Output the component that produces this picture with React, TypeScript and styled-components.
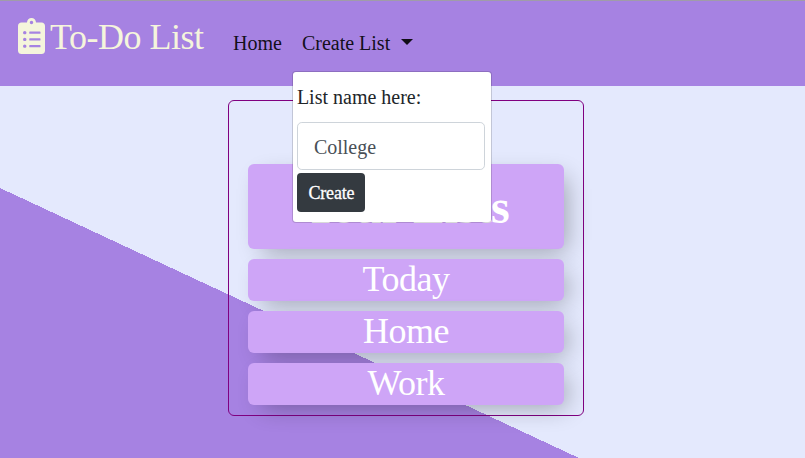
import React from "react";
import styled, { createGlobalStyle } from "styled-components";
import { FaClipboardList } from "react-icons/fa";

const GlobalStyle = createGlobalStyle`
  *, *::before, *::after { box-sizing: border-box; }
  body {
    margin: 0;
    font-family: "Liberation Serif", "Times New Roman", serif;
    color: #212529;
    overflow: hidden;
  }
`;

const Page = styled.div`
  height: 100vh;
  background: linear-gradient(205deg, #e4e9fd 510.6px, #a682e2 510.6px);
`;

const Navbar = styled.nav`
  display: flex;
  align-items: flex-start;
  height: 86px;
  padding: 0 18px;
  border-top: 1px solid #a09ca8;
  background: #a682e2;
`;

const Brand = styled.a`
  display: flex;
  align-items: flex-start;
  gap: 5px;
  width: 215px;
  padding-top: 17px;
  color: beige;
  font-size: 36px;
  line-height: 38px;
  letter-spacing: -0.5px;
  white-space: nowrap;
  svg { width: 27px; height: 36px; }
`;

const NavItem = styled.div`
  position: relative;
  padding-top: 27px;
  margin-right: 20px;
  color: rgba(0, 0, 0, 0.9);
  font-size: 20px;
  line-height: 30px;
  white-space: nowrap;
`;

const Caret = styled.span`
  display: inline-block;
  margin-left: 11px;
  vertical-align: 5px;
  border-top: 6px solid;
  border-right: 6px solid transparent;
  border-left: 6px solid transparent;
`;

const Dropdown = styled.form`
  position: absolute;
  z-index: 2;
  top: 70px;
  left: -10px;
  display: flex;
  flex-direction: column;
  align-items: flex-start;
  width: 200px;
  height: 152px;
  padding: 10px 4px 0;
  color: #212529;
  background: #fff;
  background-clip: padding-box;
  border: 1px solid rgba(0, 0, 0, 0.15);
  border-radius: 4px;
`;

const Label = styled.label`
  height: 40px;
`;

const Input = styled.input`
  width: 188px;
  height: 48px;
  margin-bottom: 3px;
  padding: 9px 16px 7px;
  color: #495057;
  font: inherit;
  border: 1px solid #ced4da;
  border-radius: 4.8px;
`;

const Button = styled.button`
  width: 68px;
  height: 39px;
  padding: 2px 0 0 1px;
  color: #fff;
  font-family: inherit;
  font-size: 18px;
  letter-spacing: -0.2px;
  -webkit-text-stroke: 0.3px #fff;
  background: #343a40;
  border: 0;
  border-radius: 4px;
`;

const Board = styled.main`
  display: flex;
  flex-direction: column;
  gap: 10px;
  width: 356px;
  height: 316px;
  margin: 14px 0 0 228px;
  padding: 63px 19px 0;
  border: 1px solid purple;
  border-radius: 6px;
`;

const Tile = styled.div<{ $heading?: boolean }>`
  flex: none;
  height: ${(p) => (p.$heading ? 85 : 42)}px;
  color: #fff;
  font-size: ${(p) => (p.$heading ? 48 : 36)}px;
  font-weight: ${(p) => (p.$heading ? 700 : 400)};
  line-height: ${(p) => (p.$heading ? 86 : 40)}px;
  letter-spacing: -0.5px;
  text-align: center;
  background: #cea5f7;
  border-radius: 6px;
  box-shadow: 8px 8px 24px -6px rgba(0, 0, 0, 0.32);
`;

const lists = ["Today", "Home", "Work"];

export default function App() {
  return (
    <Page>
      <GlobalStyle />
      <Navbar>
        <Brand><FaClipboardList />To-Do List</Brand>
        <NavItem>Home</NavItem>
        <NavItem>
          Create List<Caret />
          <Dropdown>
            <Label htmlFor="list-name">List name here:</Label>
            <Input id="list-name" defaultValue="College" />
            <Button type="button">Create</Button>
          </Dropdown>
        </NavItem>
      </Navbar>
      <Board>
        <Tile $heading>Your Lists</Tile>
        {lists.map((name) => <Tile key={name}>{name}</Tile>)}
      </Board>
    </Page>
  );
}
